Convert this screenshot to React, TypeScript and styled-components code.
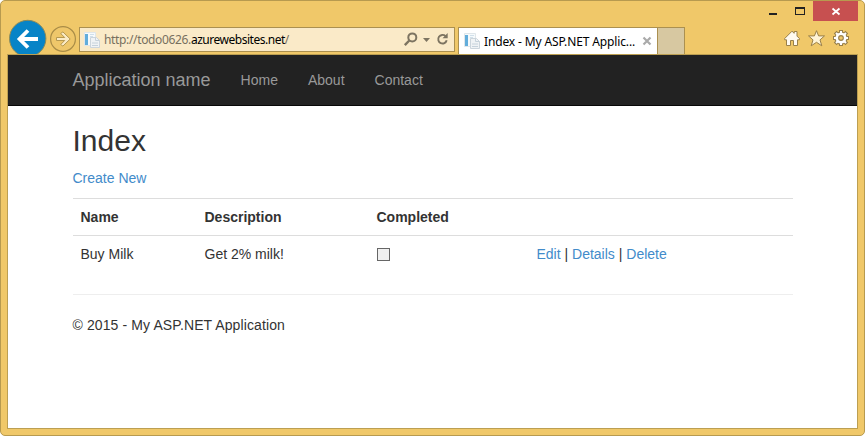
import React from "react";
import styled, { createGlobalStyle } from "styled-components";

const Global = createGlobalStyle`
  *, *::before, *::after { box-sizing: border-box; }
  body { margin: 0; background: #fff; }
`;

const BrowserWindow = styled.div`
  width: 865px;
  height: 436px;
  padding: 0 6px 6px;
  display: flex;
  flex-direction: column;
  background: #f0c869;
  border: 1px solid #b79a4f;
  border-radius: 5px;
  overflow: hidden;
`;

const Chrome = styled.header`
  height: 53px;
  flex: none;
  display: flex;
  align-items: flex-start;
  font-family: "Noto Sans", "Open Sans", sans-serif;
  font-size: 12px;
  color: #000;
`;

const NavButtons = styled.svg`
  width: 72px;
  height: 53px;
  flex: none;
`;

const AddressBar = styled.div`
  display: flex;
  align-items: center;
  width: 376px;
  height: 25px;
  margin: 26px 3px 0 0;
  padding: 0 3px 0 4px;
  background: #faeac8;
  border: 1px solid #ab9050;
`;

const Url = styled.span`
  flex: 1;
  margin-left: 4px;
  line-height: 22px;
  color: #77705f;
  letter-spacing: -0.35px;
  white-space: nowrap;
`;

const Host = styled.span`
  color: #000;
  letter-spacing: -0.48px;
`;

const BarTools = styled.svg`
  width: 48px;
  height: 21px;
  flex: none;
`;

const PageGlyph = styled.svg`
  width: 16px;
  height: 16px;
  flex: none;
`;

const Tab = styled.div`
  display: flex;
  align-items: center;
  width: 200px;
  height: 27px;
  margin-top: 26px;
  padding: 0 5px 0 5px;
  background: #fff;
  border: 1px solid #ab9050;
  border-bottom: 0;
`;

const TabTitle = styled.span`
  flex: 1;
  margin-left: 4px;
  letter-spacing: -0.13px;
  white-space: nowrap;
`;

const TabClose = styled.svg`
  width: 10px;
  height: 10px;
  flex: none;
`;

const NewTab = styled.div`
  width: 27px;
  height: 27px;
  margin-top: 26px;
  background: #d7c8a1;
  border: solid #ab9050;
  border-width: 1px 1px 0 0;
`;

const Corner = styled.svg`
  width: 96px;
  height: 53px;
  margin-left: auto;
  flex: none;
`;

const Viewport = styled.main`
  flex: 1;
  background: #fff;
  border: 1px solid #bc9f52;
  font-family: "Liberation Sans", Arial, sans-serif;
  font-size: 14px;
  line-height: 20px;
  color: #333;
`;

const Navbar = styled.nav`
  height: 51px;
  background: #222;
  border-bottom: 1px solid #080808;
`;

const Container = styled.div`
  width: 750px;
  margin: 0 auto;
  padding: 0 15px;
`;

const NavRow = styled(Container)`
  display: flex;
  align-items: center;
  height: 50px;
  color: #999;
`;

const Brand = styled.span`
  margin-right: 30px;
  font-size: 18px;
`;

const NavLink = styled.span`
  margin-right: 30px;
`;

const Title = styled.h2`
  margin: 18px 0 11px;
  font-size: 30px;
  font-weight: 400;
  line-height: 33px;
`;

const Paragraph = styled.p`
  margin: 0 0 10px;
`;

const Copyright = styled(Paragraph)`
  letter-spacing: 0.11px;
`;

const Link = styled.a`
  color: #428bca;
`;

const Table = styled.table`
  width: 720px;
  margin-bottom: 22px;
  table-layout: fixed;
  border-collapse: separate;
  border-spacing: 0;
`;

const Cell = styled.td`
  height: 37px;
  padding: 8px;
  border-top: 1px solid #ddd;
  text-align: left;
  vertical-align: top;
`;

const Col = styled.col<{ $w: number }>`
  width: ${(p) => p.$w}px;
`;

const Check = styled.span`
  display: block;
  width: 13px;
  height: 13px;
  margin-top: 4px;
  background: #f0f0f0;
  border: 1px solid #666;
`;

const Rule = styled.hr`
  margin: 0 0 20px;
  border: 0;
  border-top: 1px solid #eee;
`;

const PageIcon = () => (
  <PageGlyph viewBox="0 0 16 16">
    <path d="M.5.5h11v13H.5z" fill="#f6fafc" stroke="#dfe6ea" />
    <path d="M1 2h3v11H1z" fill="#62addb" />
    <path d="M6 2h4v1H6zM6 4h3v1H6z" fill="#d1e0ea" />
    <path d="M6.5 5.5h6l3 3v7h-9z" fill="#f0f3f5" stroke="#ccd5dc" />
    <path d="M11.5 5.5v3h4M8 11h6M8 13.5h6" fill="none" stroke="#c6d2db" />
  </PageGlyph>
);

const Navigation = () => (
  <NavButtons viewBox="7 1 72 53">
    <circle cx="27.7" cy="38.5" r="18.2" fill="#0784c7" stroke="#8c8a59" />
    <path d="M38 39H20M28 30.5L19.5 39l8.5 8.5" fill="none" stroke="#fff" strokeWidth="3.8" />
    <circle cx="63" cy="39" r="12.4" fill="#efc76a" stroke="#a98c47" strokeWidth="1.2" />
    <path d="M56.5 37.5h8.2l-4-4 2.2-1.6 7.3 7.1-7.3 7.1-2.2-1.6 4-4h-8.2z" fill="#fbebc5" stroke="#b69950" />
  </NavButtons>
);

const AddressTools = () => (
  <BarTools viewBox="403 29 48 21" fill="none" stroke="#7d7461">
    <circle cx="412.3" cy="37.4" r="4" strokeWidth="2" />
    <path d="M409.3 40.5l-4.5 4.7" strokeWidth="2.4" />
    <path d="M423 38h7l-3.5 4z" fill="#7d7461" stroke="none" />
    <path d="M445.5 36.1a4.3 4.3 0 1 0 1.2 4.2" strokeWidth="1.9" />
    <path d="M447.7 33v5.2h-5.2z" fill="#7d7461" stroke="none" />
  </BarTools>
);

const WindowTools = () => (
  <Corner viewBox="762 1 96 53">
    <path d="M813 1h45v20h-45z" fill="#c75050" />
    <path d="M769 13h8v2h-8z" fill="#222" />
    <path d="M795 7h10v8h-10zM796 9v5h8V9z" fill="#222" fillRule="evenodd" />
    <path d="M832.5 8.5l7 6M839.5 8.5l-7 6" stroke="#fff" strokeWidth="1.8" />
    <path d="M784.7 38.5l7.3-7.3 2.2 2.1v-1.8h2.8v4.6l2.4 2.4v1.3h-1.9v5.7h-4v-5h-3v5h-4v-5.7h-1.8z" fill="#fffaf0" stroke="#99804a" />
    <path d="M816.5 30.7l2.1 5.2h5.9l-4.5 4 1.8 5.9-5.3-3.5-5.3 3.5 1.8-5.9-4.5-4h5.9z" fill="#fff4d7" stroke="#99804a" />
    <g fill="none">
      <circle cx="841" cy="38" r="4.2" stroke="#99804a" strokeWidth="4.8" />
      <path d="M841 30v4M841 42v4M833 38h4M845 38h4M835.2 32.2l2.6 2.6M844.2 41.2l2.6 2.6M846.8 32.2l-2.6 2.6M837.8 41.2l-2.6 2.6" stroke="#99804a" strokeWidth="4" />
      <circle cx="841" cy="38" r="4.2" stroke="#fff" strokeWidth="2.6" />
      <path d="M841 31v3M841 42v3M834 38h3M845 38h3M836 33l2 2M844 41l2 2M846 33l-2 2M838 41l-2 2" stroke="#fff" strokeWidth="2" />
    </g>
  </Corner>
);

export default function App() {
  return (
    <>
      <Global />
      <BrowserWindow>
        <Chrome>
          <Navigation />
          <AddressBar>
            <PageIcon />
            <Url>http://todo0626.<Host>azurewebsites.net</Host>/</Url>
            <AddressTools />
          </AddressBar>
          <Tab>
            <PageIcon />
            <TabTitle>Index - My ASP.NET Applic...</TabTitle>
            <TabClose viewBox="0 0 10 10">
              <path d="M1.5 1.5l7 7M8.5 1.5l-7 7" stroke="#aaa" strokeWidth="2.2" />
            </TabClose>
          </Tab>
          <NewTab />
          <WindowTools />
        </Chrome>
        <Viewport>
          <Navbar>
            <NavRow>
              <Brand>Application name</Brand>
              <NavLink>Home</NavLink>
              <NavLink>About</NavLink>
              <NavLink>Contact</NavLink>
            </NavRow>
          </Navbar>
          <Container>
            <Title>Index</Title>
            <Paragraph><Link>Create New</Link></Paragraph>
            <Table>
              <colgroup>
                <Col $w={124} />
                <Col $w={172} />
                <Col $w={160} />
                <Col $w={264} />
              </colgroup>
              <tbody>
                <tr>
                  <Cell as="th">Name</Cell>
                  <Cell as="th">Description</Cell>
                  <Cell as="th">Completed</Cell>
                  <Cell as="th" />
                </tr>
                <tr>
                  <Cell>Buy Milk</Cell>
                  <Cell>Get 2% milk!</Cell>
                  <Cell><Check /></Cell>
                  <Cell><Link>Edit</Link> | <Link>Details</Link> | <Link>Delete</Link></Cell>
                </tr>
              </tbody>
            </Table>
            <Rule />
            <Copyright>© 2015 - My ASP.NET Application</Copyright>
          </Container>
        </Viewport>
      </BrowserWindow>
    </>
  );
}
